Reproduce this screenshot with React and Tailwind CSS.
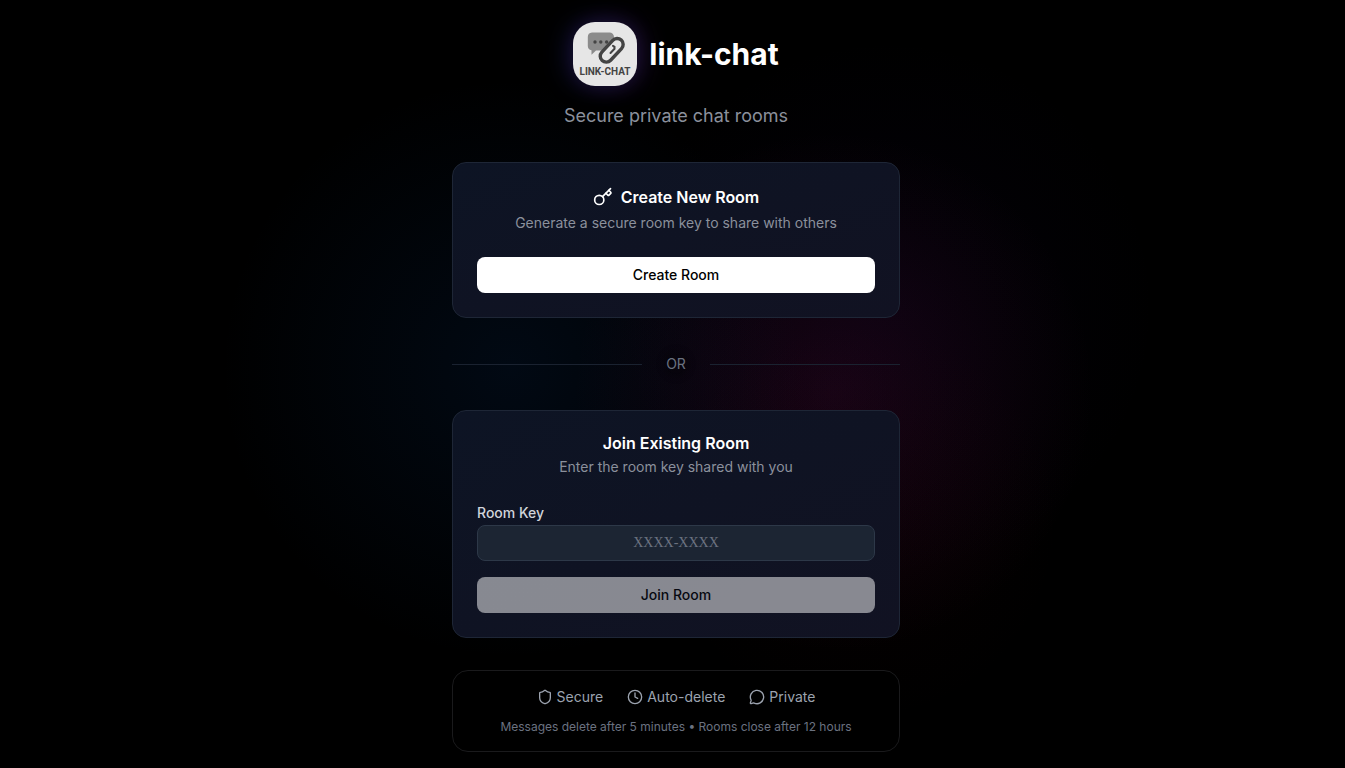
import { useState } from 'react';
import { Clock, Key, MessageCircle, Shield } from 'lucide-react';

function Logo() {
  return (
    <svg
      viewBox="0 0 64 64"
      role="img"
      aria-label="link-chat logo"
      className="size-16 rounded-[22px] bg-[#e6e6e6] shadow-[-6px_0_26px_rgba(59,70,200,0.22),6px_0_26px_rgba(130,60,200,0.22)]"
    >
      <path
        d="M19 10.500h17.500a4.500 4.500 0 0 1 4.500 4.500v9a4.500 4.500 0 0 1-4.500 4.500H23l-4.500 4.300v-4.600a4.500 4.500 0 0 1-3.700-4.500v-8.700A4.500 4.500 0 0 1 19 10.500z"
        fill="#8b8b8b"
      />
      <g fill="#444">
        <circle cx="22" cy="20" r="1.700" />
        <circle cx="27.800" cy="20" r="1.700" />
        <circle cx="33.600" cy="20" r="1.700" />
      </g>
      <rect
        x="24.700"
        y="22.300"
        width="28"
        height="12"
        rx="6"
        fill="#e6e6e6"
        stroke="#444"
        strokeWidth="3.400"
        transform="rotate(-47 38.700 28.300)"
      />
      <path d="M37.500 31l4-4.200v-2l-1.500-1" fill="none" stroke="#444" strokeWidth="2" strokeLinecap="round" />
      <text
        x="32"
        y="53"
        textAnchor="middle"
        fill="#444"
        className="font-[Roboto,sans-serif] text-[10px] font-bold"
      >
        LINK-CHAT
      </text>
    </svg>
  );
}

const features = [
  { icon: Shield, label: 'Secure' },
  { icon: Clock, label: 'Auto-delete' },
  { icon: MessageCircle, label: 'Private' },
];

const card = 'rounded-[14px] border border-[#1e2636] bg-linear-to-br from-[#0d1424] to-[#111222] p-6';
const button = 'h-9 w-full rounded-lg bg-white text-sm font-medium text-black';

export default function App() {
  const [roomKey, setRoomKey] = useState('');

  return (
    <div className="flex min-h-screen justify-center bg-black bg-[radial-gradient(circle_at_62%_51%,rgba(140,20,110,0.15),transparent_260px),radial-gradient(circle_at_66%_40%,rgba(50,20,140,0.06),transparent_270px),radial-gradient(circle_at_64%_68%,rgba(120,10,20,0.05),transparent_200px),radial-gradient(circle_at_38%_48%,rgba(10,70,150,0.13),transparent_290px)] pt-[22px] pr-[17px] pb-4 pl-6 font-[Inter,sans-serif] text-white">
      <main className="w-full max-w-md">
        <header className="mb-8 text-center">
          <div className="mb-4 flex items-center justify-center gap-3">
            <Logo />
            <h1 className="text-3xl font-bold">link-chat</h1>
          </div>
          <p className="text-lg text-[#8b909c]">Secure private chat rooms</p>
        </header>

        <section className={card}>
          <div className="mb-6 flex flex-col gap-1.5 text-center">
            <h2 className="flex items-center justify-center gap-2 text-base leading-none font-semibold">
              <Key className="size-5" />
              Create New Room
            </h2>
            <p className="text-sm text-[#8b909c]">Generate a secure room key to share with others</p>
          </div>
          <button type="button" className={button}>Create Room</button>
        </section>

        <div className="my-9 flex items-center gap-6">
          <div className="h-px flex-1 bg-[#1a2230]" />
          <span className="rounded-full bg-black/20 text-sm text-[#6b7280] shadow-[0_0_6px_4px_rgba(0,0,0,0.2)]">OR</span>
          <div className="h-px flex-1 bg-[#1a2230]" />
        </div>

        <section className={card}>
          <div className="mb-6 flex flex-col gap-1.5 text-center">
            <h2 className="text-base leading-none font-semibold">Join Existing Room</h2>
            <p className="text-sm text-[#8b909c]">Enter the room key shared with you</p>
          </div>
          <form onSubmit={(e) => e.preventDefault()}>
            <label htmlFor="roomKey" className="block text-sm leading-6 font-medium text-[#d1d5db]">Room Key</label>
            <input
              id="roomKey"
              type="text"
              placeholder="XXXX-XXXX"
              value={roomKey}
              onChange={(e) => setRoomKey(e.target.value.toUpperCase())}
              className="mb-4 block h-9 w-full rounded-lg border border-[#2d3848] bg-[#1c2533] px-3 text-center font-['Liberation_Serif',serif] text-sm placeholder:text-[#6b7280]"
            />
            <button type="submit" disabled={!roomKey} className={`${button} disabled:opacity-50`}>Join Room</button>
          </form>
        </section>

        <footer className="mt-8 rounded-2xl border border-[#1a1a1c] bg-black/60 p-4 text-center">
          <ul className="mb-3 flex justify-center gap-6 text-sm text-[#9ca3af]">
            {features.map(({ icon: Icon, label }) => (
              <li key={label} className="flex items-center gap-1">
                <Icon className="size-4" />
                {label}
              </li>
            ))}
          </ul>
          <p className="text-xs text-[#6b7280]">Messages delete after 5 minutes • Rooms close after 12 hours</p>
        </footer>
      </main>
    </div>
  );
}
